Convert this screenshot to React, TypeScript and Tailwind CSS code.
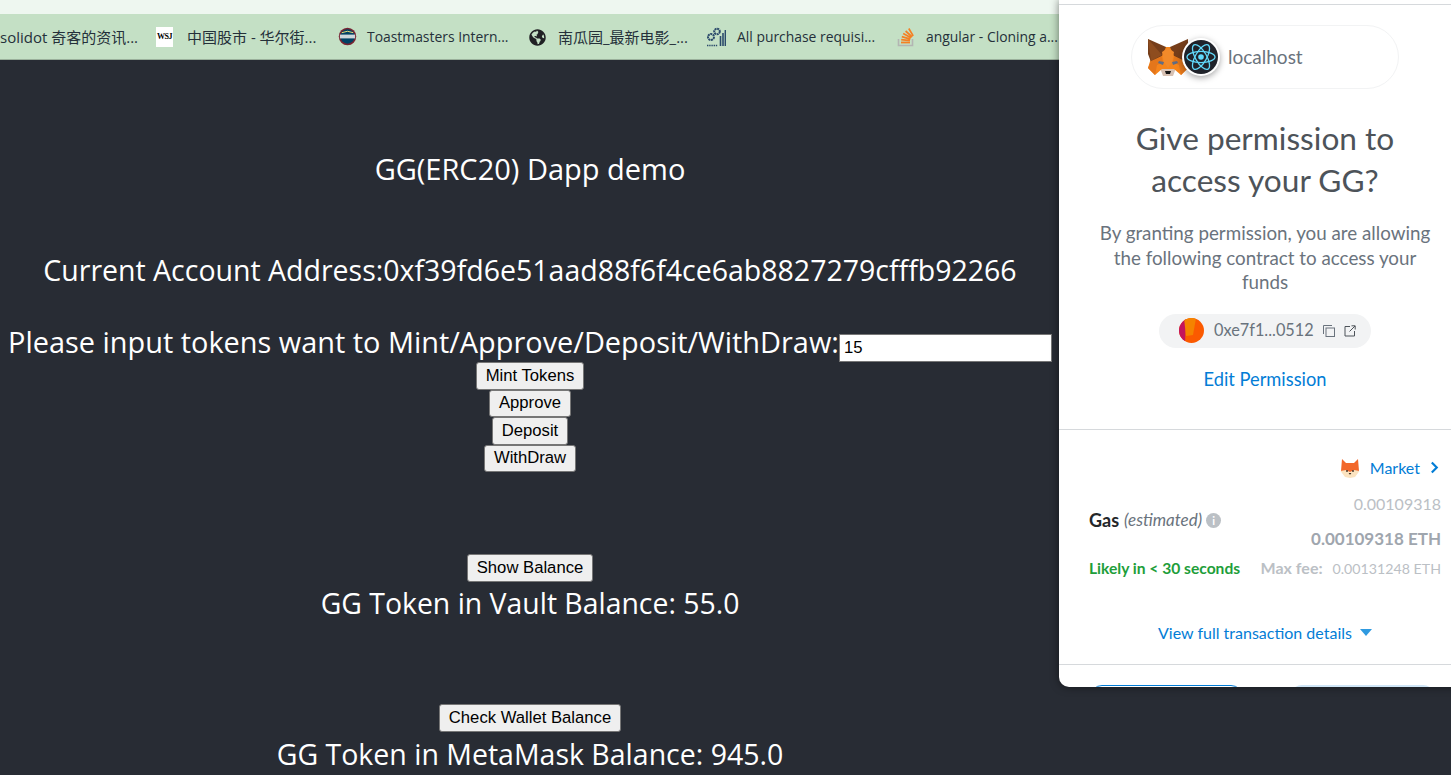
import React from 'react';
import { FaGlobeAmericas } from 'react-icons/fa';

const Fox: React.FC = () => (
  <svg viewBox="0 0 40 38" className="w-10 h-[38px]">
    <polygon points="15,38 25,38 28,30 12,30" fill="#d7c1b3" />
    <polygon points="3,20 14,9 26,9 37,20 40,30 33,37 26,31 14,31 7,37 0,30" fill="#f6851b" />
    <polygon points="0,1 18,9 14,18 3,24 0,16" fill="#763e1a" />
    <polygon points="40,1 22,9 26,18 37,24 40,16" fill="#763e1a" />
    <polygon points="0,1 14,17 3,23" fill="#8e4d1f" />
    <polygon points="0,30 3,23 14,18 15,24 9,27 7,37" fill="#e4761b" />
    <polygon points="40,30 37,23 26,18 25,24 31,27 33,37" fill="#e2761b" />
    <polygon points="16,24 20,30 24,24 26,14 20,10 14,14" fill="#f28a2a" />
    <polygon points="11,23 16,24 15,27 10,25" fill="#5f6d86" />
    <polygon points="29,23 24,24 25,27 30,25" fill="#5f6d86" />
    <polygon points="17,33 23,33 22,36 18,36" fill="#161616" />
  </svg>
);

const ReactBadge: React.FC = () => (
  <div className="w-[38px] h-[38px] rounded-full bg-white shadow-[0_2px_6px_rgba(0,0,0,0.35)] flex items-center justify-center">
    <svg viewBox="0 0 34 34" className="w-[34px] h-[34px]">
      <circle cx="17" cy="17" r="17" fill="#20232a" />
      <g fill="none" stroke="#61dafb" strokeWidth="1.3">
        <ellipse cx="17" cy="17" rx="14" ry="5.6" />
        <ellipse cx="17" cy="17" rx="14" ry="5.6" transform="rotate(60 17 17)" />
        <ellipse cx="17" cy="17" rx="14" ry="5.6" transform="rotate(120 17 17)" />
      </g>
      <circle cx="17" cy="17" r="2.8" fill="#61dafb" />
    </svg>
  </div>
);

const MarketFox: React.FC = () => (
  <svg viewBox="0 0 20 20" className="w-5 h-5">
    <polygon points="2,1 6,5 14,5 18,1 19,13 10,17 1,13" fill="#f2672a" />
    <polygon points="0.5,13 6,12 10,14 14,12 19.5,13 15,19 10,20 5,19" fill="#fbe3c0" />
    <circle cx="7" cy="13" r="0.9" fill="#3b2a20" />
    <circle cx="13" cy="13" r="0.9" fill="#3b2a20" />
    <polygon points="8.6,15 11.4,15 10,16.8" fill="#3b2a20" />
  </svg>
);

const Bookmark: React.FC<{ icon?: React.ReactNode; label: string; className: string; gapClass?: string }> = ({
  icon,
  label,
  className,
  gapClass,
}) => (
  <div className={`flex items-center shrink-0 ${className}`}>
    {icon && <div className={`shrink-0 flex items-center ${gapClass}`}>{icon}</div>}
    <span className="whitespace-nowrap">{label}</span>
  </div>
);

const PageButton: React.FC<{ children: React.ReactNode; className?: string }> = ({ children, className }) => (
  <button
    className={`block shrink-0 h-[27.5px] bg-[#efefef] border border-[#767676] rounded-[3px] text-black text-[16.67px] leading-[20px] px-[9px] font-['Liberation_Sans',Arial,sans-serif] ${className ?? ''}`}
  >
    {children}
  </button>
);

const App: React.FC = () => {
  return (
    <div className="relative w-[1451px] h-[775px] overflow-hidden bg-[#282c34] font-['Open_Sans','Noto_Sans_CJK_SC',sans-serif]">
      <div className="h-[14px] bg-[#eef7f0]" />
      <div className="h-[46px] pt-[1px] bg-[#c4e0c5] border-b border-[#9ab09b] flex items-center text-[13.9px] text-[#25303a] overflow-hidden">
        <Bookmark label="solidot 奇客的资讯..." className="w-[156px] text-[15px]" />
        <Bookmark
          className="w-[182px] text-[15px]"
          gapClass="mr-[14px]"
          label="中国股市 - 华尔街..."
          icon={
            <div className="w-[17px] h-5 bg-white flex items-center justify-center text-black text-[8px] font-bold font-['Liberation_Serif',serif] tracking-[-0.5px]">
              WSJ
            </div>
          }
        />
        <Bookmark
          className="w-[191px]"
          gapClass="mr-[10px]"
          label="Toastmasters Intern..."
          icon={
            <svg viewBox="0 0 20 20" className="w-[19px] h-[19px]">
              <circle cx="10" cy="10" r="9.2" fill="#772432" />
              <circle cx="10" cy="10" r="7.6" fill="#004165" />
              <rect x="2" y="8" width="16" height="4" fill="#cdd6dc" />
              <path d="M4 6 Q10 3 16 6" stroke="#f2df74" strokeWidth="1" fill="none" />
            </svg>
          }
        />
        <Bookmark
          className="w-[177px] text-[15px]"
          gapClass="mr-[12px]"
          label="南瓜园_最新电影_..."
          icon={<FaGlobeAmericas className="w-[17px] h-[17px] text-[#202124]" />}
        />
        <Bookmark
          className="w-[191px]"
          gapClass="mr-[11px]"
          label="All purchase requisi..."
          icon={
            <svg viewBox="0 0 20 20" className="w-5 h-5 text-[#2b4a6b]" fill="none" stroke="currentColor">
              <circle cx="5" cy="10" r="3" strokeWidth="2" strokeDasharray="2 0.6" />
              <circle cx="11" cy="4.5" r="2.8" strokeWidth="2" strokeDasharray="2 0.6" />
              <path d="M14.5 19V9M17 19V6M19.4 19V3" strokeWidth="1.6" />
              <path d="M1 18.5h11" strokeWidth="1.6" strokeDasharray="1.4 0.8" />
            </svg>
          }
        />
        <Bookmark
          className="w-[170px]"
          gapClass="mr-[11px]"
          label="angular - Cloning a..."
          icon={
            <svg viewBox="0 0 18 20" className="w-[18px] h-5">
              <path d="M1.5 12v6.5h14V12" fill="none" stroke="#b3b5b3" strokeWidth="1.6" />
              <path d="M4 15.5h9" stroke="#f48024" strokeWidth="1.8" />
              <path d="M4.2 12.6l8.8 1M4.8 9.6l8.6 2.5M6.2 6.6l7.8 4.2M8.6 4l6.6 6M11.8 1.5l4.4 7.4" stroke="#f48024" strokeWidth="1.7" fill="none" />
            </svg>
          }
        />
      </div>

      <main className="w-[1060px] flex flex-col items-center text-white text-[28.5px] leading-[38px]">
        <p className="mt-[90px] text-[29px]">GG(ERC20) Dapp demo</p>
        <p className="mt-[63px]">Current Account Address:0xf39fd6e51aad88f6f4ce6ab8827279cfffb92266</p>
        <div className="mt-[45px] flex items-end h-[28px]">
          <span className="whitespace-nowrap text-[28.9px] mb-[1px]">Please input tokens want to Mint/Approve/Deposit/WithDraw:</span>
          <input
            defaultValue="15"
            className="w-[213px] h-[28px] bg-white border-[1.5px] border-[#767676] px-[4px] text-black text-[16.67px] leading-none font-['Liberation_Sans',Arial,sans-serif]"
          />
        </div>
        <PageButton>Mint Tokens</PageButton>
        <PageButton>Approve</PageButton>
        <PageButton>Deposit</PageButton>
        <PageButton>WithDraw</PageButton>
        <PageButton className="mt-[82px]">Show Balance</PageButton>
        <p className="mt-[2.5px] text-[28.4px]">GG Token in Vault Balance: 55.0</p>
        <PageButton className="mt-[82px]">Check Wallet Balance</PageButton>
        <p className="mt-[3px] whitespace-nowrap">GG Token in MetaMask Balance: 945.0</p>
      </main>

      {/* popup runs past the right edge of the window */}
      <aside className="absolute top-0 left-[1059px] w-[412px] h-[687px] bg-white rounded-bl-[10px] overflow-hidden shadow-[0_0_8px_rgba(0,0,0,0.5)] flex flex-col items-center font-['Lato','Open_Sans',sans-serif]">
        <div className="w-full h-[5px] border-b border-[#d6d9dc] shrink-0" />
        <div className="mt-5 w-[268px] h-16 rounded-full border border-[#f2f3f4] flex items-center pl-4 shrink-0">
          <Fox />
          <div className="-ml-[6px] relative">
            <ReactBadge />
          </div>
          <span className="ml-[8px] text-[19px] text-[#6a737d]">localhost</span>
        </div>
        <h2 className="mt-[28px] text-[31.6px] leading-[42px] text-[#4d5359] text-center">
          Give permission to
          <br />
          access your GG?
        </h2>
        <p className="mt-[20px] w-[340px] text-[18.8px] leading-[24.5px] text-[#6a737d] text-center">
          By granting permission, you are allowing the following contract to access your funds
        </p>
        <div className="mt-[19px] w-[212px] h-[34px] rounded-full bg-[#f2f3f4] flex items-center pl-5 shrink-0">
          <svg viewBox="0 0 25 25" className="w-[25px] h-[25px]">
            <clipPath id="jazz">
              <circle cx="12.5" cy="12.5" r="12.5" />
            </clipPath>
            <g clipPath="url(#jazz)">
              <rect width="25" height="25" fill="#fb5a00" />
              <polygon points="0,0 7,0 6,25 0,25" fill="#c4145c" />
              <polygon points="5,0 17,0 14,17 7,18" fill="#f58300" />
            </g>
          </svg>
          <span className="ml-[10px] text-[16.3px] text-[#6a737d]">0xe7f1...0512</span>
          <svg viewBox="0 0 12 12" className="ml-[9px] w-3 h-3" fill="none" stroke="#6a737d" strokeWidth="1">
            <rect x="3" y="3" width="8.5" height="8.5" />
            <path d="M0.5 9V0.5H9" />
          </svg>
          <svg viewBox="0 0 12 12" className="ml-[9px] w-3 h-3" fill="none" stroke="#4d5359" strokeWidth="1">
            <path d="M6 1.5H1v9.5h9.5V6" />
            <path d="M5.5 6.5L11 1M7.5 0.8h3.7v3.7" />
          </svg>
        </div>
        <a className="mt-[19px] text-[18.3px] leading-[24px] text-[#037dd6]">Edit Permission</a>
        <div className="mt-[38px] w-full border-t border-[#d6d9dc]" />

        <div className="w-full pl-[30px] pr-[30px] flex flex-col">
          <div className="mt-[28px] h-5 flex items-center justify-end">
            <MarketFox />
            <span className="ml-[10px] text-[16px] text-[#037dd6]">Market</span>
            <svg viewBox="0 0 10 14" className="ml-[10px] mr-[2px] w-[9px] h-[13px]" fill="none" stroke="#037dd6" strokeWidth="2.4">
              <path d="M2 1.5L7.5 7 2 12.5" />
            </svg>
          </div>
          <div className="mt-[15px] flex items-center justify-between">
            <div className="flex items-center mb-[2px]">
              <span className="text-[18px] font-bold text-[#24272a]">Gas</span>
              <span className="ml-[5px] text-[17px] italic text-[#6a737d]">(estimated)</span>
              <span className="ml-[4px] w-[15px] h-[15px] rounded-full bg-[#bbc0c5] text-white text-[11px] font-bold leading-[15px] text-center">
                i
              </span>
            </div>
            <div className="flex flex-col items-end">
              <span className="text-[16px] leading-[22px] text-[#bbc0c5]">0.00109318</span>
              <span className="mt-[13px] text-[17px] leading-[22px] font-bold text-[#9fa6ae]">0.00109318 ETH</span>
            </div>
          </div>
          <div className="mt-[8px] flex items-center justify-between text-[14.2px] leading-[20px]">
            <span className="font-bold text-[#1e9e3a] text-[15.6px]">Likely in &lt; 30 seconds</span>
            <span className="text-[#bbc0c5]">
              <span className="font-bold text-[16px] mr-[10px]">Max fee:</span>0.00131248 ETH
            </span>
          </div>
        </div>

        <div className="mt-[44px] flex items-center">
          <span className="text-[16px] leading-[20px] text-[#037dd6]">View full transaction details</span>
          <span className="ml-[8px] w-0 h-0 border-x-[6px] border-x-transparent border-t-[7px] border-t-[#2f9ae0]" />
        </div>
        <div className="mt-[21px] w-full border-t border-[#d6d9dc]" />
        <div className="mt-[20px] w-full flex pl-[31px]">
          <button className="w-[153px] h-11 rounded-[12px] border border-[#037dd6] shrink-0" />
          <button className="ml-[47px] w-[145px] h-11 rounded-[12px] bg-[#cfe5f6] shrink-0" />
        </div>
      </aside>
    </div>
  );
};

export default App;
